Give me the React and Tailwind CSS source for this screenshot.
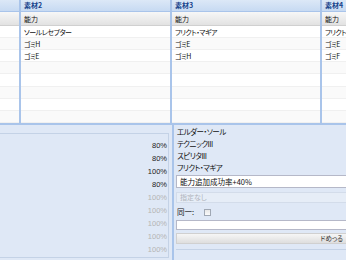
import React from "react";

const F = { fontFamily: '"Noto Sans CJK JP", "Noto Sans", sans-serif', fontFeatureSettings: '"palt"' };

function Column({ title, items, width, last }) {
  const rows = Array.from({ length: 8 }, (_, i) => items[i] || "");
  return (
    <div className={`flex flex-col shrink-0 ${width} ${last ? "" : "border-r-2 border-r-[#a9c4ea]"}`}>
      <div className="h-[12px] bg-gradient-to-b from-[#dce8f7] to-[#c7daf2] border-b border-[#a9c4ea] pl-[3px] text-[7px] leading-[11px] font-bold text-[#15428b] whitespace-nowrap overflow-hidden">
        {title}
      </div>
      <div className="h-[14px] bg-gradient-to-b from-[#f7f7f7] to-[#e2e2e2] border-b border-[#d0d0d0] pl-[3px] text-[7px] leading-[14px] text-[#111] whitespace-nowrap overflow-hidden">
        {title ? "能力" : ""}
      </div>
      {rows.map((t, i) => (
        <div
          key={i}
          className={`h-[12.4px] ${i % 2 ? "bg-[#fafafa]" : "bg-white"} border-b border-[#f0f0f0] pl-[3px] text-[7px] leading-[12px] tracking-[-0.5px] text-[#111] whitespace-nowrap overflow-hidden`}
        >
          {t}
        </div>
      ))}
    </div>
  );
}

export default function App() {
  const pcts = [
    ["80%", true],
    ["80%", true],
    ["100%", true],
    ["80%", true],
    ["100%", false],
    ["100%", false],
    ["100%", false],
    ["100%", false],
    ["100%", false],
  ];
  const lineCls = "text-[7.5px] leading-[12px] tracking-[-0.5px] text-[#111] pl-[1px] whitespace-nowrap";
  return (
    <div className="w-[346px] h-[260px] overflow-hidden bg-[#dfe8f6] flex flex-col" style={F}>
      <div className="flex h-[125px] border-b-2 border-[#a9c4ea] overflow-hidden bg-white">
        <Column title="" items={[]} width="w-[21px]" />
        <Column title="素材2" items={["ソールレセプター", "ゴミH", "ゴミE"]} width="w-[151px]" />
        <Column title="素材3" items={["フリクト・マギア", "ゴミE", "ゴミH"]} width="w-[150px]" />
        <Column title="素材4" items={["フリクト・マギア", "ゴミE", "ゴミF"]} width="flex-1" last />
      </div>
      <div className="flex flex-1 min-h-0">
        <div className="w-[172px] shrink-0 flex flex-col pt-[8px] pb-[2px] pr-[3px]">
          <div className="flex-1 border border-[#c4d2e6] border-l-0 bg-[#dfe8f6] flex flex-col items-end pr-[1px] pt-[5px]">
            {pcts.map(([p, on], i) => (
              <div
                key={i}
                className={`h-[13px] leading-[13px] text-[7.5px] ${on ? "text-[#222]" : "text-[#b4b4b4]"}`}
                style={{ fontFamily: '"Liberation Sans", Arial, sans-serif' }}
              >
                {p}
              </div>
            ))}
          </div>
        </div>
        <div className="flex-1 border-l-2 border-[#a9c4ea] flex flex-col pl-[2px] pt-[1px]">
          <div className={lineCls}>エルダー・ソール</div>
          <div className={lineCls}>テクニックIII</div>
          <div className={lineCls}>スピリタIII</div>
          <div className={lineCls}>フリクト・マギア</div>
          <div className="mt-[1px] h-[13px] bg-white border border-[#b5b8c8] border-r-0 pl-[3px] text-[7.5px] leading-[11px] text-[#111] whitespace-nowrap">
            能力追加成功率+40%
          </div>
          <div className="mt-[4px] h-[11px] bg-[#e6edf7] border border-[#d3dcea] border-r-0 pl-[3px] text-[7px] leading-[9px] text-[#b0b4bc] whitespace-nowrap">
            指定なし
          </div>
          <div className="mt-[3px] h-[12px] flex items-center text-[7.5px] text-[#111]">
            <span className="pl-[1px]">同一:</span>
            <span className="ml-[10px] w-[7px] h-[7px] border border-[#a0a8b4] bg-gradient-to-b from-[#e8e8e8] to-[#fafafa]" />
          </div>
          <div className="mt-[2px] h-[10px] bg-white border border-[#b5b8c8] border-r-0" />
          <div className="mt-[3px] h-[11px] bg-gradient-to-b from-[#f6f6f6] to-[#dedede] border border-[#d0d0d0] border-r-0 flex justify-end pr-[3px] text-[6.5px] leading-[9px] text-[#333] whitespace-nowrap">
            ドめっる
          </div>
          <div className="mt-[5px] border-t border-[#c4d2e6]" />
        </div>
      </div>
    </div>
  );
}
